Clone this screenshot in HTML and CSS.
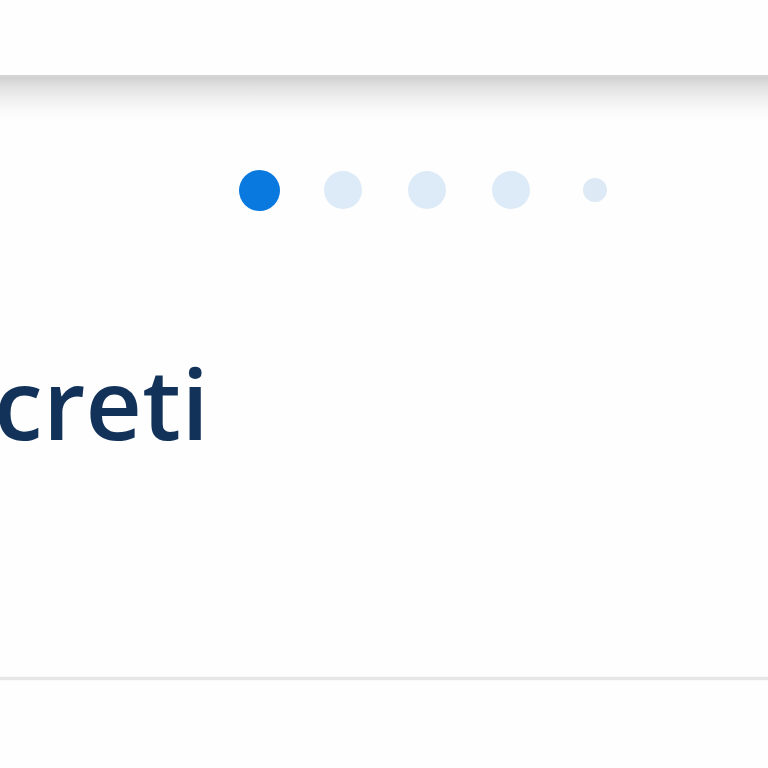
FILE: index.html
```html
<!DOCTYPE html>
<html>
<head>
<meta charset="utf-8">
<link rel="stylesheet" href="styles.css">
</head>
<body>
<div class="page">
  <header class="header"></header>
  <div class="shade"></div>
  <section class="card">
    <div class="dots">
      <span class="dot dot-active"></span>
      <span class="dot"></span>
      <span class="dot"></span>
      <span class="dot"></span>
      <span class="dot dot-small"></span>
    </div>
    <h1 class="title">creti</h1>
  </section>
  <div class="rule"></div>
</div>
</body>
</html>
```

FILE: styles.css
```css
html, body {
  margin: 0;
  padding: 0;
  background: #fefefe;
  overflow: hidden;
}
.page {
  width: 768px;
  height: 768px;
  display: flex;
  flex-direction: column;
  font-family: "Open Sans", "Noto Sans", sans-serif;
}
.header {
  height: 75px;
  background: #fefefe;
  flex: none;
}
.shade {
  height: 46px;
  flex: none;
  background: linear-gradient(to bottom, #d6d6d6 0px, #d2d2d2 3px, #e2e2e2 12px, #f0f0f0 24px, #fafafa 36px, #fefefe 46px);
}
.card {
  height: 556px;
  flex: none;
  display: flex;
  flex-direction: column;
}
.dots {
  display: flex;
  align-items: center;
  height: 42px;
  margin-top: 48px;
  padding-left: 239px;
}
.dot {
  width: 38px;
  height: 38px;
  border-radius: 50%;
  background: #ddebf8;
  margin-right: 46px;
  flex: none;
}
.dot-active {
  width: 41px;
  height: 41px;
  background: #0a79df;
  margin-right: 44px;
}
.dot-small {
  width: 24px;
  height: 24px;
  margin-left: 7px;
  background: #dde9f5;
}
.title {
  margin: 0;
  margin-top: 142px;
  margin-left: -6px;
  font-size: 98px;
  font-weight: 600;
  line-height: 1;
  color: #13325a;
  letter-spacing: 0.3px;
}
.rule {
  height: 3px;
  flex: none;
  background: #e6e6e6;
  box-shadow: 0 0 2px #ececec;
}
```
